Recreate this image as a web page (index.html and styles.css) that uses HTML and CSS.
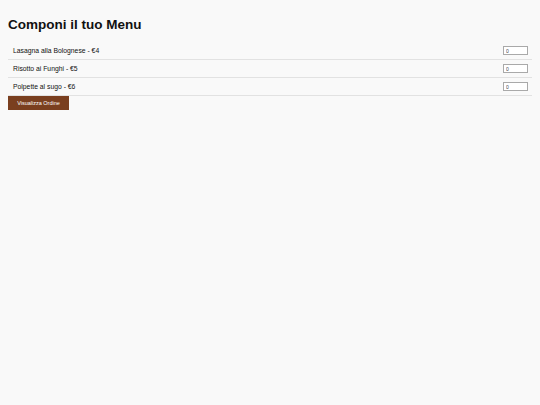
FILE: index.html
```html
<!DOCTYPE html>
<html lang="it">
<head>
<meta charset="utf-8">
<title>Componi il tuo Menu</title>
<link rel="stylesheet" href="styles.css">
</head>
<body>
<h1 class="title">Componi il tuo Menu</h1>
<div class="menu">
  <div class="item"><span class="name">Lasagna alla Bolognese - €4</span><input class="qty" type="number" value="0"></div>
  <div class="item"><span class="name">Risotto ai Funghi - €5</span><input class="qty" type="number" value="0"></div>
  <div class="item"><span class="name">Polpette al sugo - €6</span><input class="qty" type="number" value="0"></div>
</div>
<button class="order">Visualizza Ordine</button>
</body>
</html>
```
FILE: styles.css
```css
html, body {
  background: #f9f9f9;
}
body {
  margin: 8px;
  font-family: "Liberation Sans", Arial, sans-serif;
  color: #111;
}
.title {
  font-size: 13.5px;
  line-height: 16px;
  font-weight: bold;
  margin: 9px 0 9px;
}
.menu {
  display: flex;
  flex-direction: column;
}
.item {
  display: flex;
  align-items: center;
  justify-content: space-between;
  height: 17px;
  padding: 0 4px 0 5px;
  border-bottom: 1px solid #e2e2e2;
  font-size: 6.8px;
}
.qty {
  box-sizing: border-box;
  width: 25px;
  height: 9px;
  margin: 0;
  padding: 0 2px;
  border: 1px solid #a9a9a9;
  background: #fff;
  font-family: "Liberation Sans", Arial, sans-serif;
  font-size: 5px;
  color: #444;
  -moz-appearance: textfield;
}
.qty::-webkit-inner-spin-button,
.qty::-webkit-outer-spin-button {
  -webkit-appearance: none;
  margin: 0;
}
.order {
  display: block;
  width: 61px;
  height: 14px;
  margin: 0;
  padding: 0;
  border: none;
  background: #7a3f1f;
  color: #fff;
  font-family: "Liberation Sans", Arial, sans-serif;
  font-size: 5.5px;
}
```
